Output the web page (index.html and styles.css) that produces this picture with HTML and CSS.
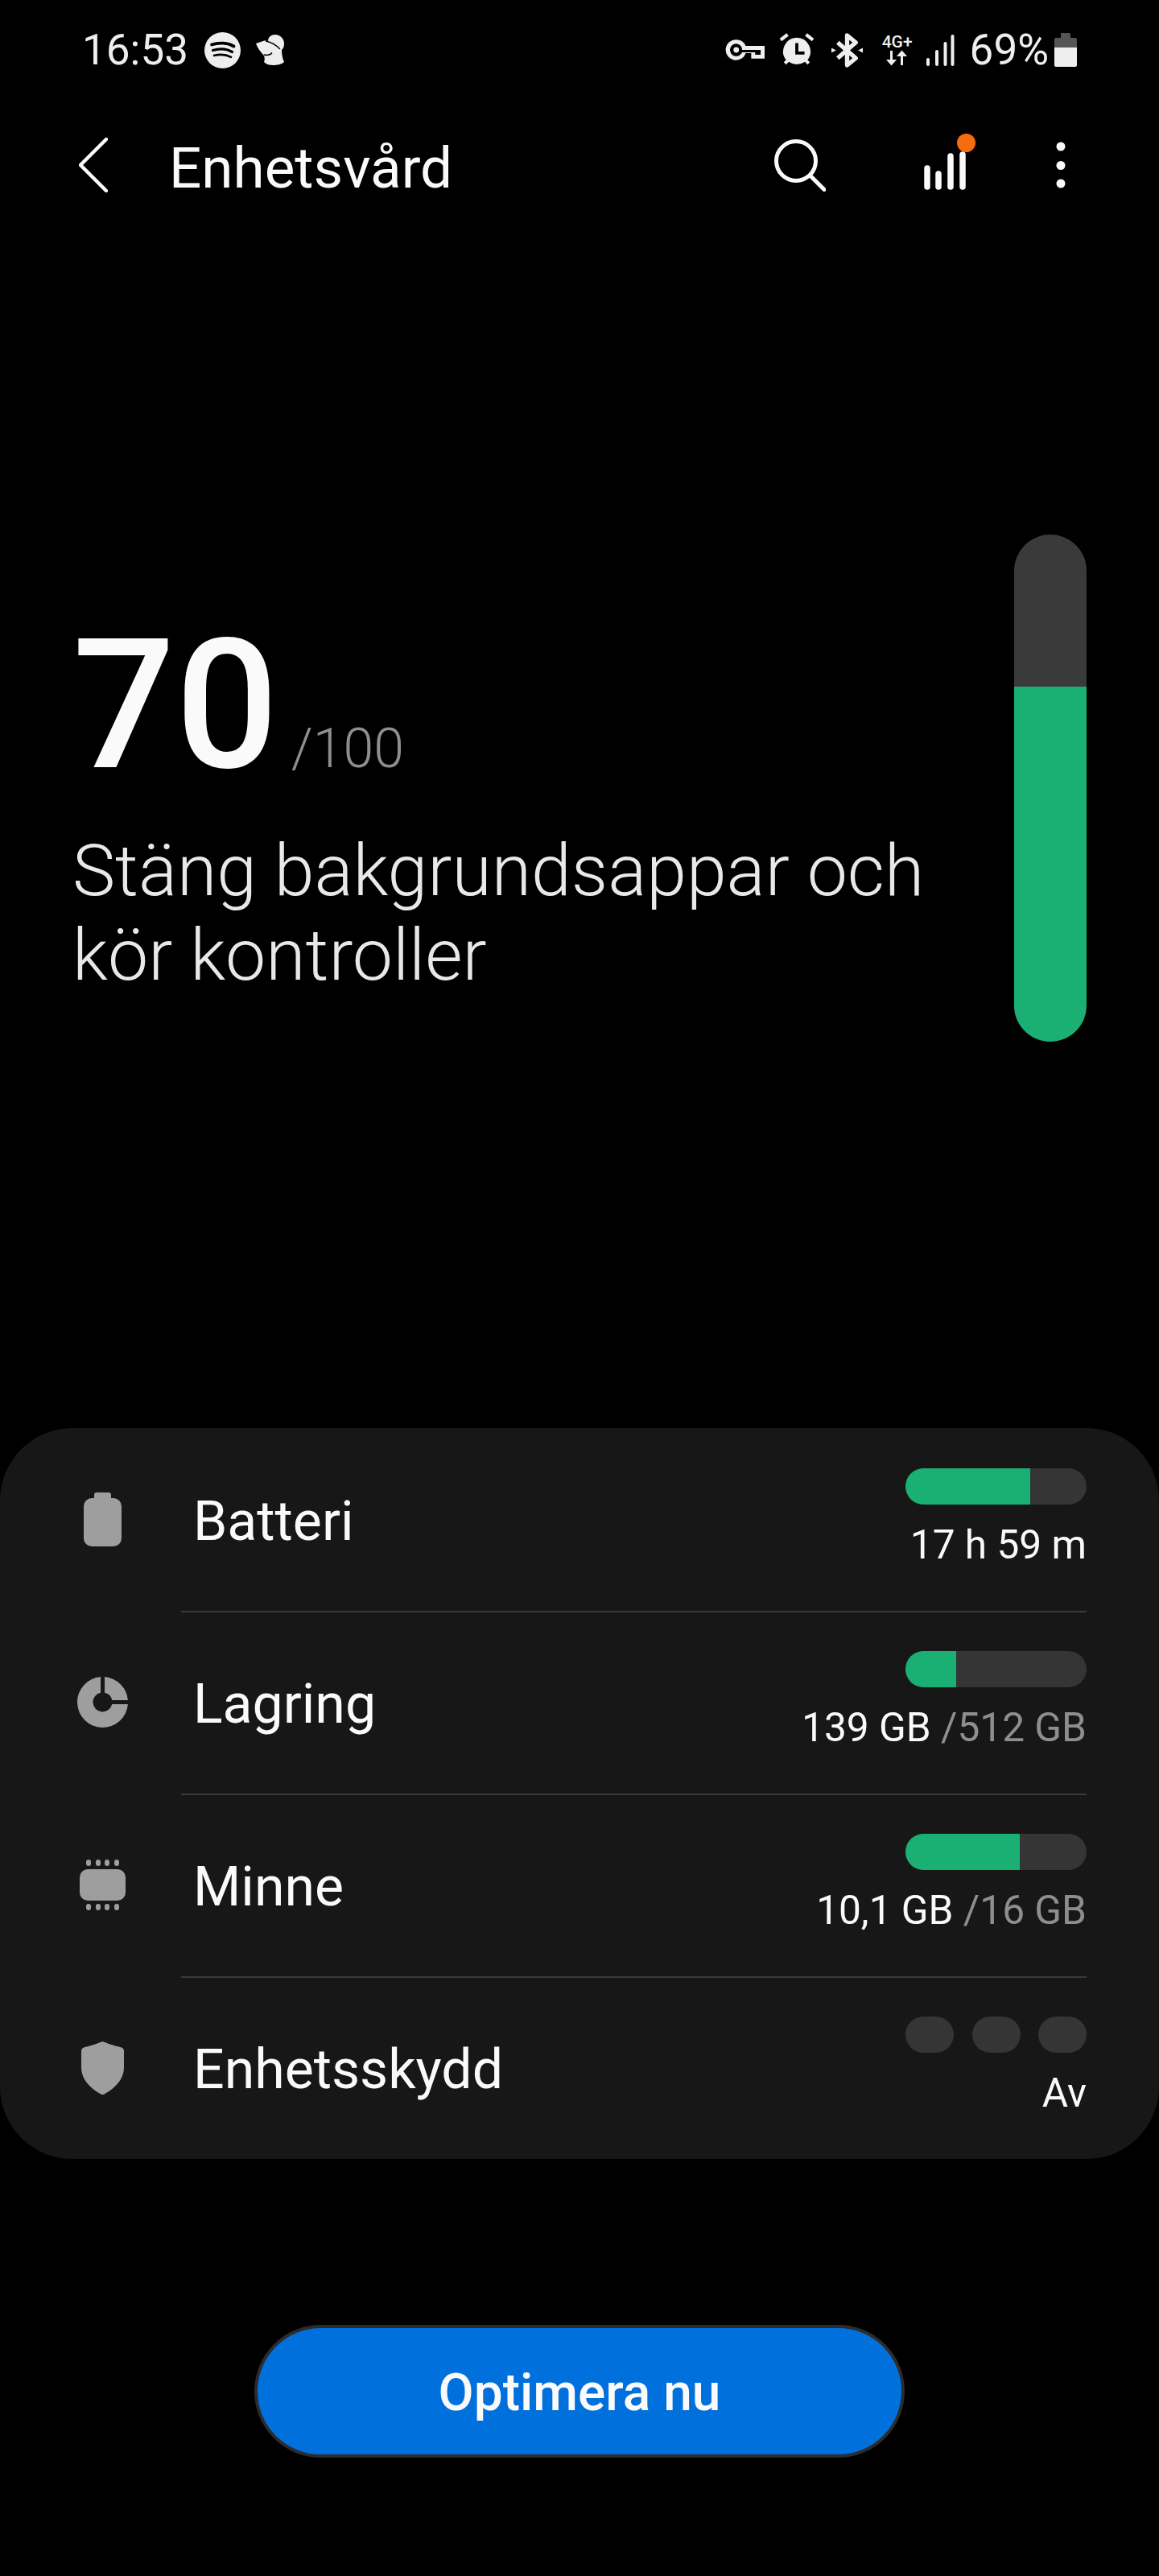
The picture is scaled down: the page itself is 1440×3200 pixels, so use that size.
FILE: index.html
```html
<!DOCTYPE html>
<html lang="sv">
<head>
<meta charset="utf-8">
<title>Enhetsvård</title>
<link rel="stylesheet" href="styles.css">
</head>
<body>
<div class="screen">
  <div class="status">
    <div class="status-left">
      <span class="clock">16:53</span>
      <svg class="ic-spotify" viewBox="0 0 45 45"><circle cx="22.500" cy="22.500" r="22.500" fill="#eee"/><g fill="none" stroke="#000" stroke-linecap="round"><path d="M9 15.500c9-3 20-2.500 27.500 2" stroke-width="3.800"/><path d="M10.500 22.500c8-2.400 17-2 24 2" stroke-width="3.200"/><path d="M12 29c7-1.800 14.500-1.500 21 1.800" stroke-width="2.600"/></g></svg>
      <svg class="ic-mole" viewBox="0 0 35 38"><path fill="#eee" d="M0 11l9-3c2-.8 4-.6 6 .2C15 3 19 0 24 0c6 0 11 5 11 11 0 4-1 6-3 8 0 5 1 11 3 15-3 3-9 4-14 4-4 0-8-1-11-4 1-2 1-5 0-8C6 22 2 17 0 11z"/><path fill="none" stroke="#000" stroke-width="1.300" d="M12 8c6 1 13 5 18 10M10 25c4 1 8 0 10-2.500"/></svg>
    </div>
    <div class="status-right">
      <svg class="ic-key" viewBox="0 0 50 28"><path fill="#eee" fill-rule="evenodd" d="M14 1a13 13 0 0 1 12 8h24v16H33v-7h-7A13 13 0 1 1 14 1zm0 5a8 8 0 1 0 7.500 11h16.500v3h7v-6h-23.500a8 8 0 0 0-7.500-8zm0 4.500a3.500 3.500 0 1 1 0 7 3.500 3.500 0 0 1 0-7z"/></svg>
      <svg class="ic-alarm" viewBox="0 0 46 44"><path fill="#eee" fill-rule="evenodd" d="M23 6a18 18 0 0 1 14 29l3 3-3 3-3.500-3.500a18 18 0 0 1-21 0L9 41l-3-3 3-3A18 18 0 0 1 23 6zm-2 7v15h12v-4h-8V13z"/><path stroke="#eee" stroke-width="4.500" d="M2 9l9-7M44 9l-9-7"/></svg>
      <svg class="ic-bt" viewBox="0 0 40 44"><path fill="none" stroke="#eee" stroke-width="5.500" stroke-linejoin="round" d="M8 12l23 20-11 9V3l11 9L8 32"/><path fill="#eee" d="M0 19l6 3-6 3zM40 19l-6 3 6 3z"/></svg>
      <div class="net"><span class="net-label">4G+</span><svg class="ic-arrows" viewBox="0 0 30 20"><path fill="#eee" d="M6 1h3v11h5l-6.500 7.500L1 12h5zM22 19h-3V8h-5l6.500-7.500L27 8h-5z"/></svg></div>
      <svg class="ic-signal" viewBox="0 0 37 39"><path stroke="#eee" stroke-width="4" stroke-linecap="round" d="M4 37v-6M15 37V21M25.500 37V11M34.500 37V2"/></svg>
      <span class="pct">69%</span>
      <svg class="ic-batt" viewBox="0 0 28 42"><path fill="#555" d="M8 1a1 1 0 0 1 1-1h10a1 1 0 0 1 1 1v5h6a2 2 0 0 1 2 2v10H0V8a2 2 0 0 1 2-2h6z"/><path fill="#eee" d="M0 18h28v22a2 2 0 0 1-2 2H2a2 2 0 0 1-2-2z"/></svg>
    </div>
  </div>

  <div class="appbar">
    <svg class="ic-back" viewBox="0 0 36 68"><path fill="none" stroke="#fafafa" stroke-width="4.500" stroke-linecap="round" stroke-linejoin="round" d="M34 2L2 34l32 32"/></svg>
    <h1 class="title">Enhetsvård</h1>
    <svg class="ic-search" viewBox="0 0 64 65"><circle cx="27" cy="27" r="24.500" fill="none" stroke="#fafafa" stroke-width="5"/><path stroke="#fafafa" stroke-width="5" stroke-linecap="round" d="M44.500 45L62 62.500"/></svg>
    <div class="stats">
      <svg class="ic-bars" viewBox="0 0 52 48"><path stroke="#fafafa" stroke-width="7.500" stroke-linecap="round" d="M4 44V21M18 44V28M33 44V6M48 44V4"/></svg>
      <span class="dot"></span>
    </div>
    <svg class="ic-more" viewBox="0 0 12 58"><circle cx="6" cy="6" r="5.500" fill="#fafafa"/><circle cx="6" cy="29.500" r="5.500" fill="#fafafa"/><circle cx="6" cy="52" r="5.500" fill="#fafafa"/></svg>
  </div>

  <section class="hero">
    <div class="hero-text">
      <div class="score"><span class="num">70</span><span class="max">/100</span></div>
      <p class="advice">Stäng bakgrundsappar och<br>kör kontroller</p>
    </div>
    <div class="vbar"><div class="vbar-fill"></div></div>
  </section>

  <section class="card">
    <div class="row">
      <div class="icon"><svg class="ic-r-batt" viewBox="0 0 47 67"><path fill="#9e9e9e" d="M13 3a3 3 0 0 1 3-3h15a3 3 0 0 1 3 3v4h3a10 10 0 0 1 10 10v40a10 10 0 0 1-10 10H10A10 10 0 0 1 0 57V17A10 10 0 0 1 10 7h3z"/></svg></div>
      <div class="label">Batteri</div>
      <div class="meta">
        <div class="track"><div class="fill fill-batt"></div></div>
        <div class="val">17 h 59 m</div>
      </div>
    </div>
    <div class="row">
      <div class="icon"><svg class="ic-r-pie" viewBox="0 0 63 63"><path fill="#9e9e9e" d="M34 .1A31.500 31.500 0 0 1 62.900 29H43.200A12 12 0 0 0 34 19.800zM29 .1v19.700A12 12 0 1 0 43.200 34h19.700A31.500 31.500 0 1 1 29 .1z"/></svg></div>
      <div class="label">Lagring</div>
      <div class="meta">
        <div class="track"><div class="fill fill-store"></div></div>
        <div class="val">139 GB <span class="dim">/512 GB</span></div>
      </div>
    </div>
    <div class="row">
      <div class="icon"><svg class="ic-r-chip" viewBox="0 0 57 64"><rect y="12" width="57" height="39" rx="10" fill="#9e9e9e"/><g fill="#9e9e9e"><rect x="8" width="6" height="8" rx="3"/><rect x="20" width="6" height="8" rx="3"/><rect x="31" width="6" height="8" rx="3"/><rect x="43" width="6" height="8" rx="3"/><rect x="8" y="55" width="6" height="8" rx="3"/><rect x="20" y="55" width="6" height="8" rx="3"/><rect x="31" y="55" width="6" height="8" rx="3"/><rect x="43" y="55" width="6" height="8" rx="3"/></g></svg></div>
      <div class="label">Minne</div>
      <div class="meta">
        <div class="track"><div class="fill fill-mem"></div></div>
        <div class="val">10,1 GB <span class="dim">/16 GB</span></div>
      </div>
    </div>
    <div class="row">
      <div class="icon"><svg class="ic-r-shield" viewBox="0 0 53 66"><path fill="#9e9e9e" d="M26.500 0c1 0 7 3.500 22 7 3 .8 4.500 2.500 4.500 5v20c0 15-11 26-24.500 33.500-1.500.7-2.500.7-4 0C11 58 0 47 0 32V12c0-2.500 1.500-4.200 4.500-5 15-3.500 21-7 22-7z"/></svg></div>
      <div class="label">Enhetsskydd</div>
      <div class="meta">
        <div class="pills"><span class="pill"></span><span class="pill"></span><span class="pill"></span></div>
        <div class="val">Av</div>
      </div>
    </div>
  </section>

  <div class="action"><button class="cta">Optimera nu</button></div>
</div>
</body>
</html>
```
FILE: styles.css
```css
* { box-sizing: border-box; }
html, body { margin: 0; background: #000; }
body { font-family: Roboto, "Noto Sans", sans-serif; color: #fafafa; }
.screen { width: 1440px; height: 3200px; display: flex; flex-direction: column; overflow: hidden; }

.status { height: 124px; padding: 0 102px 0 102px; display: flex; justify-content: space-between; align-items: center; color: #eee; }
.status-left, .status-right { display: flex; align-items: center; }
.clock { font-size: 53px; line-height: 1; }
.ic-spotify { width: 45px; height: 45px; margin-left: 20px; }
.ic-mole { width: 35px; height: 38px; margin-left: 19px; }
.ic-key { width: 49px; height: 28px; }
.ic-alarm { width: 44px; height: 42px; margin-left: 18px; }
.ic-bt { width: 39px; height: 43px; margin-left: 21px; }
.net { width: 40px; margin-left: 23px; display: flex; flex-direction: column; align-items: center; }
.net-label { font-size: 21px; font-weight: 500; line-height: 20px; }
.ic-arrows { width: 30px; height: 20px; }
.ic-signal { width: 37px; height: 39px; margin-left: 14px; }
.pct { font-size: 53px; line-height: 1; margin-left: 19px; }
.ic-batt { width: 28px; height: 42px; margin-left: 7px; }

.appbar { height: 164px; padding: 0 116px 2px 98px; display: flex; align-items: center; }
.ic-back { width: 36px; height: 68px; }
.title { font-size: 71px; font-weight: 400; margin: 6px 0 0 76px; line-height: 1; flex: 1; }
.ic-search { width: 64px; height: 65px; }
.stats { position: relative; width: 52px; height: 48px; margin: 14px 0 0 122px; }
.ic-bars { display: block; width: 52px; height: 48px; }
.dot { position: absolute; left: 41px; top: -22px; width: 23px; height: 23px; border-radius: 50%; background: #f56c0e; }
.ic-more { width: 12px; height: 58px; margin-left: 112px; }

.hero { padding: 376px 90px 0 90px; height: 1486px; display: flex; justify-content: space-between; align-items: flex-start; }
.hero-text { padding-top: 112px; }
.score { display: flex; align-items: baseline; }
.num { font-size: 225px; font-weight: 500; line-height: 200px; }
.max { font-size: 68px; font-weight: 300; color: #8e8e8e; margin-left: 16px; }
.advice { margin: 53px 0 0; font-size: 89.6px; font-weight: 300; line-height: 105px; color: #e8e8e8; }
.vbar { width: 90px; height: 630px; border-radius: 45px; background: #3a3a3a; overflow: hidden; display: flex; align-items: flex-end; }
.vbar-fill { width: 100%; height: 441px; background: #1bb073; }

.card { background: #171717; border-radius: 90px; height: 908px; padding: 0 90px 0 0; display: flex; flex-direction: column; }
.row { flex: 1; display: flex; align-items: center; position: relative; }
.row + .row::before { content: ""; position: absolute; left: 225px; right: 0; top: 0; height: 2px; background: #3a3a3a; }
.icon { width: 255px; display: flex; justify-content: center; flex: none; }
.icon svg { display: block; }
.ic-r-batt { width: 47px; height: 67px; }
.ic-r-pie { width: 63px; height: 63px; }
.ic-r-chip { width: 57px; height: 64px; }
.ic-r-shield { width: 53px; height: 66px; }
.label { flex: 1; font-size: 68px; font-weight: 400; margin: 0 0 0 -15px; padding-top: 5px; }
.meta { display: flex; flex-direction: column; align-items: flex-end; margin-bottom: 4px; }
.track { width: 225px; height: 45px; border-radius: 23px; background: #353535; overflow: hidden; }
.fill { height: 100%; background: #1bb073; }
.fill-batt { width: 155px; }
.fill-store { width: 63px; }
.fill-mem { width: 142px; }
.pills { width: 225px; display: flex; justify-content: space-between; }
.pill { width: 60px; height: 45px; border-radius: 23px; background: #353535; }
.val { font-size: 49.6px; line-height: 56px; margin-top: 22px; }
.dim { color: #8e8e8e; }

.action { flex: 1; display: flex; justify-content: center; padding-top: 206px; }
.cta { width: 808px; height: 165px; border-radius: 83px; background: #0070dd; border: 4px solid #2c2c2c; color: #fafafa; font: 500 64px Roboto, sans-serif; padding: 3px 0 0; }
```
